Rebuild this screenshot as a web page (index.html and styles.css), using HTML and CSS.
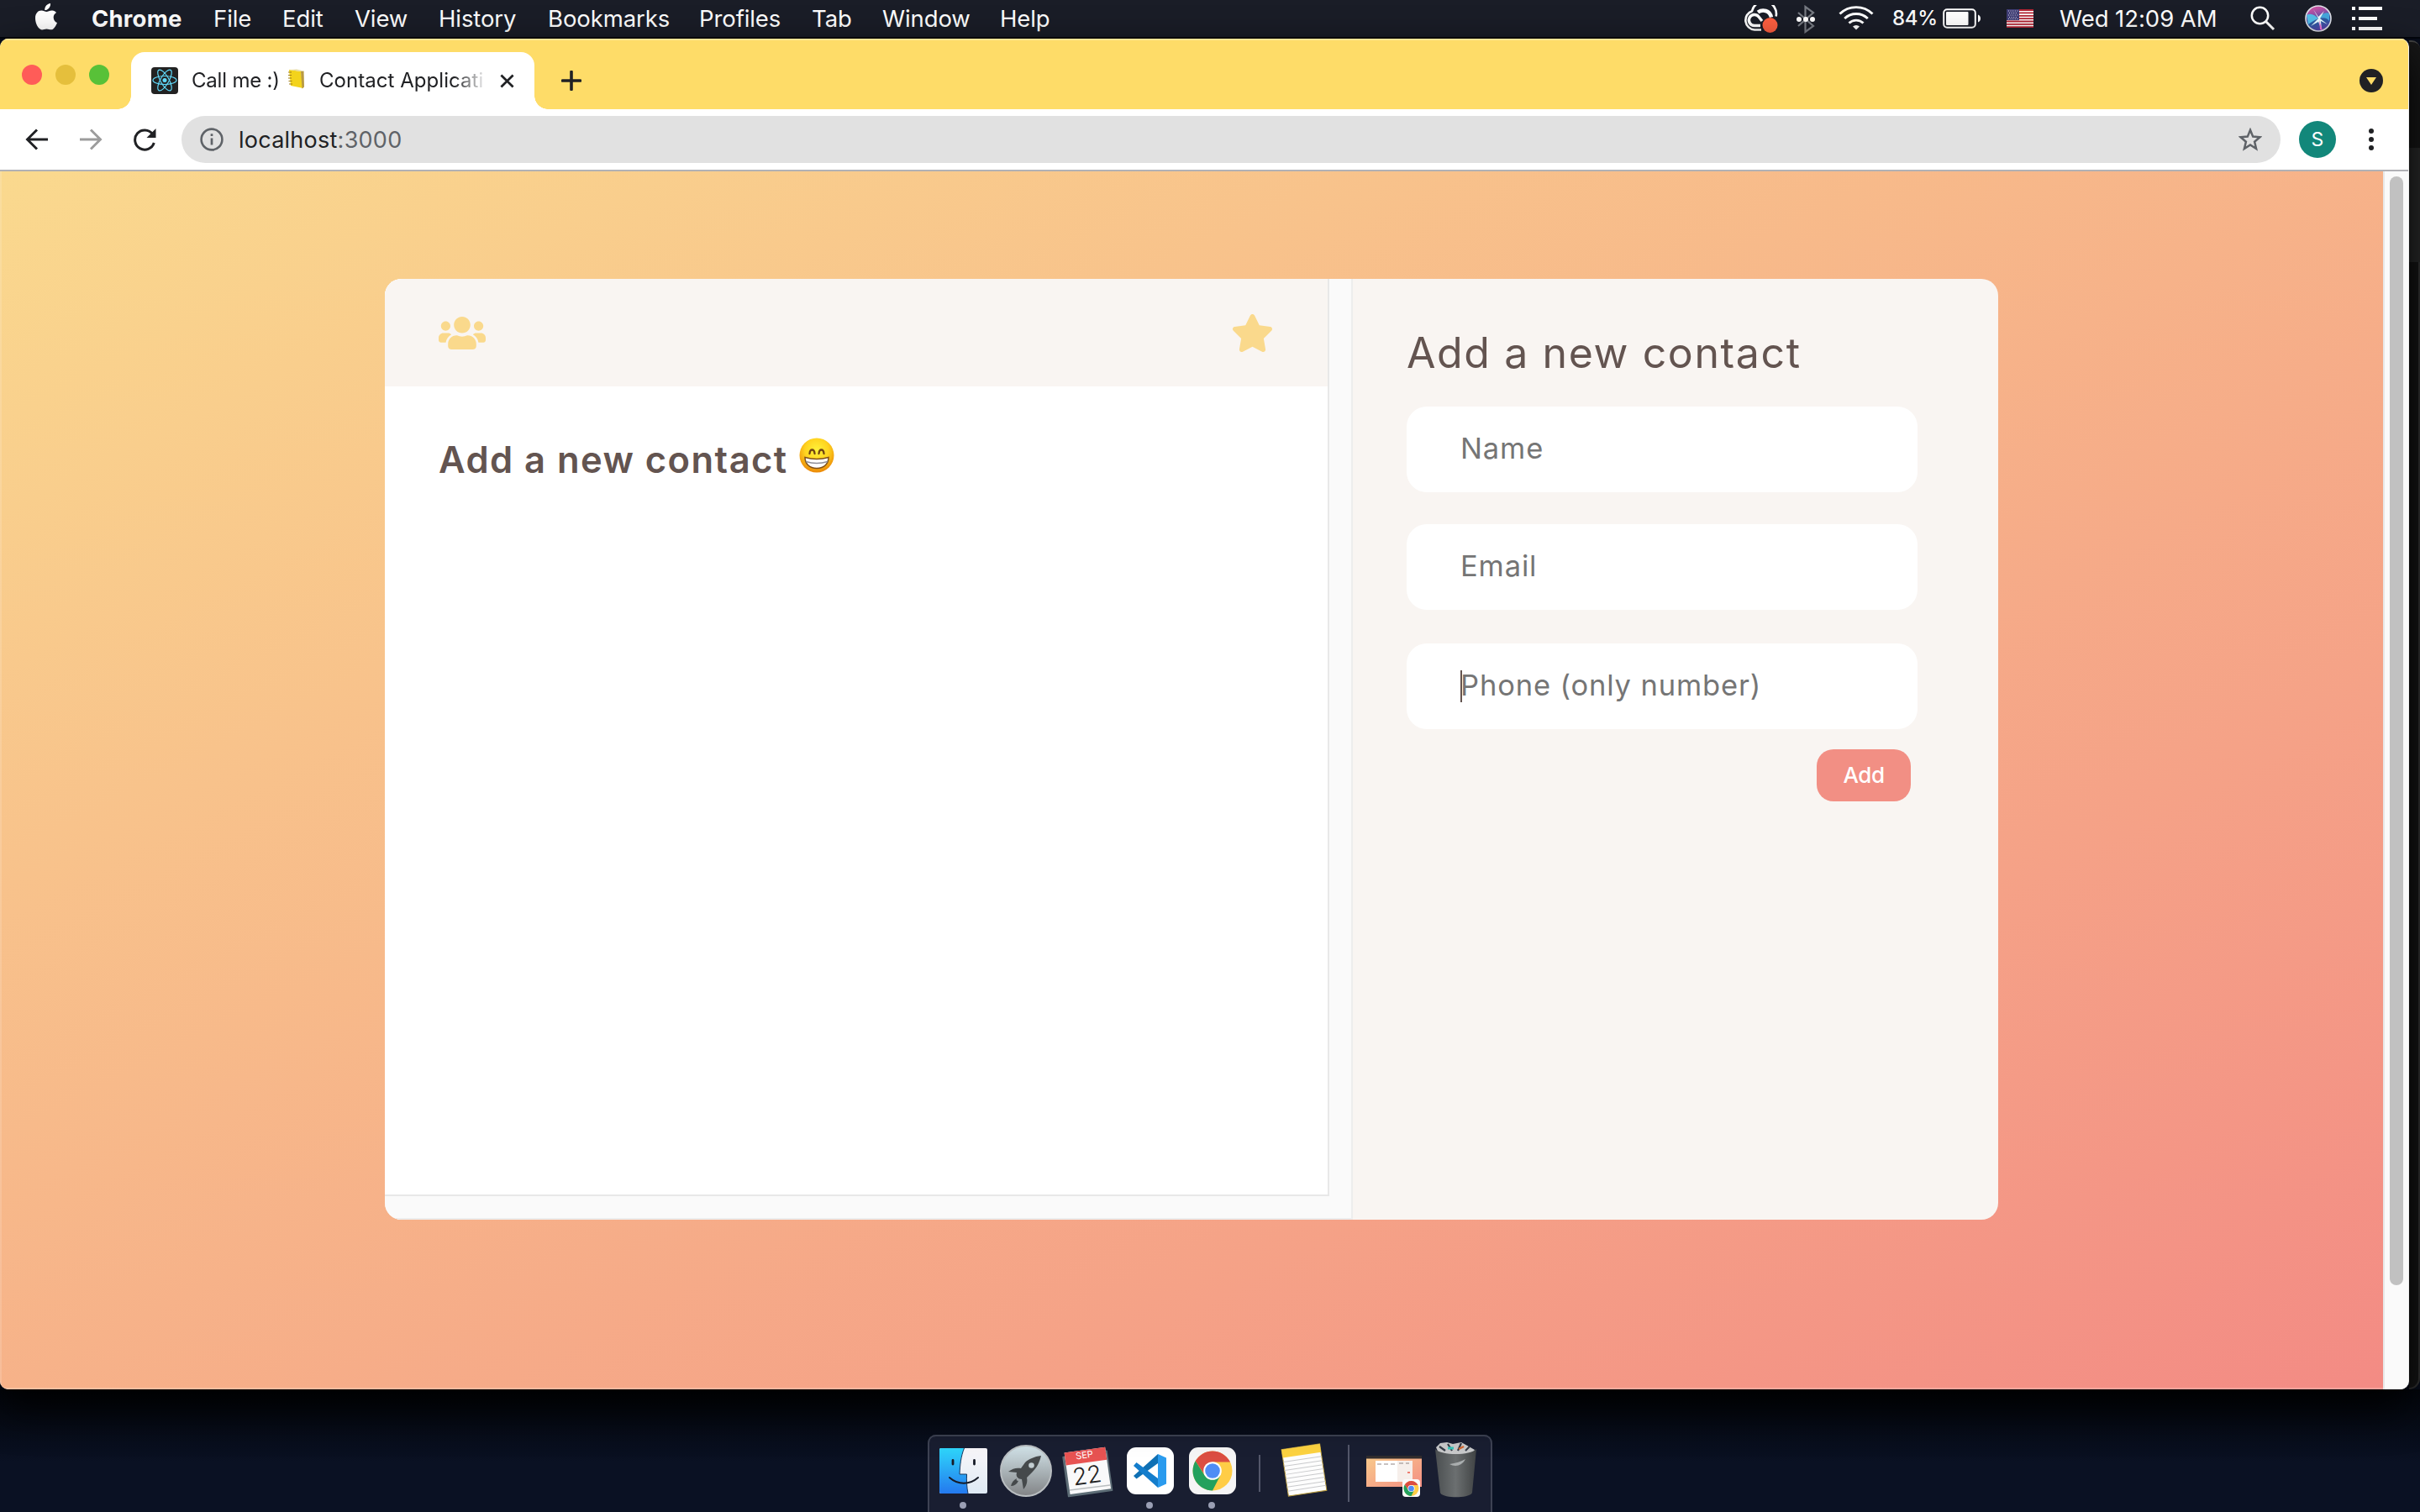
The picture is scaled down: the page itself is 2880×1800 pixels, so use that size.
FILE: index.html
```html
<!DOCTYPE html>
<html lang="en">
<head>
<meta charset="utf-8">
<title>Call me :) Contact Application</title>
<link rel="stylesheet" href="styles.css">
</head>
<body>
<div class="desktop">
  <header class="menubar">
    <svg class="apple" viewBox="0 0 26 32"><path d="M18 0c.4 2.400-.7 4.600-2 6-1.300 1.400-3 2.200-4.700 2-.3-2.300.8-4.400 2-5.700C14.600 1 16.400.2 18 0zM25 11c-2.300 1.500-3.400 3.400-3.300 5.900.1 3 1.800 5.100 4.300 6.100-.9 2.600-2.600 5.500-4.400 7.200-2.600 2.400-5 .3-8.100.3s-5.200 2-7.900.1C2.200 28 0 22.500 0 17.500 0 12 3.300 8.600 7.300 8.600c2.500 0 4.300 1.500 6.100 1.500 1.600 0 3.900-1.700 6.800-1.500 2 .1 3.700 1 4.800 2.400z" fill="#fff"/></svg>
    <nav class="menus">
      <span class="menu menu-app">Chrome</span><span class="menu">File</span><span class="menu">Edit</span><span class="menu">View</span><span class="menu">History</span><span class="menu">Bookmarks</span><span class="menu">Profiles</span><span class="menu">Tab</span><span class="menu">Window</span><span class="menu">Help</span>
    </nav>
    <div class="status">
      <svg class="s-cloud" viewBox="0 0 42 34"><g fill="none" stroke="#fff"><path d="M21 29.500H13A11.500 11.500 0 0 1 10 7.200a13.500 13.500 0 0 1 28.600 6.300" stroke-width="2.600"/><path d="M20 24.500h-7a6.500 6.500 0 1 1 5-10.500l4 5" stroke-width="3.400"/><path d="M17 8.500c6-4 14-2 16 6" stroke-width="4.500"/></g><circle cx="31.500" cy="24" r="9" fill="#ff5f40"/></svg>
      <svg class="s-bt" viewBox="0 0 24 34"><path d="M3 9l18 16-9.500 7V2L21 9 3 25" fill="none" stroke="#777b83" stroke-width="2.200"/><g fill="#fff"><circle cx="4" cy="17" r="3"/><circle cx="12" cy="17" r="3"/><circle cx="20" cy="17" r="3"/></g></svg>
      <svg class="s-wifi" viewBox="0 0 42 30"><g fill="none" stroke="#fff" stroke-width="2.900"><path d="M1.500 10.500a28 28 0 0 1 39 0M7.200 16a20 20 0 0 1 27.600 0M12.500 21.500a12.300 12.300 0 0 1 17 0"/></g><path d="M21 29.500l-4-4a5.800 5.800 0 0 1 8 0z" fill="#fff"/></svg>
      <span class="battery-text">84%</span>
      <svg class="s-bat" viewBox="0 0 46 24"><rect x="1.200" y="1.200" width="37.600" height="21.600" rx="4" fill="none" stroke="#fff" stroke-width="2"/><rect x="4" y="4" width="26.500" height="16" rx="1" fill="#fff"/><path d="M42 7.500c4 1.500 4 7.500 0 9z" fill="#fff"/></svg>
      <svg class="s-flag" viewBox="0 0 32 22"><path fill="#fff" d="M0 0h32v22H0z"/><path d="M0 1h32M0 4.400h32M0 7.800h32M0 11.200h32M0 14.500h32M0 17.900h32M0 21.200h32" stroke="#b32534" stroke-width="1.800"/><path fill="#3f3d75" d="M0 0h15v13H0z"/><path d="M2 2h12M3 4.500h10M2 7h12M3 9.500h10M2 11.500h12" stroke="#d9d9ea" stroke-dasharray="1 1.600" stroke-width="1"/></svg>
      <span class="clock">Wed 12:09 AM</span>
      <svg class="s-search" viewBox="0 0 30 30"><circle cx="11.500" cy="11.500" r="9.700" fill="none" stroke="#fff" stroke-width="2.500"/><path d="M18.500 18.500l9.500 9.500" stroke="#fff" stroke-width="3"/></svg>
      <svg class="s-siri" viewBox="0 0 32 32"><defs><linearGradient id="siri" x1=".3" y1="0" x2=".6" y2="1"><stop offset="0" stop-color="#d9559f"/><stop offset=".3" stop-color="#9a4fa8"/><stop offset=".6" stop-color="#285da4"/><stop offset="1" stop-color="#5d3fa8"/></linearGradient></defs><circle cx="16" cy="16" r="15" fill="url(#siri)" stroke="#dfe2e8" stroke-width="1.600"/><path d="M2 12c5-3 10 0 14 4-6 3-10 5-12 7z" fill="#55bfe9"/><path d="M29 10c-5-2-9 1-13 6 7-2 11 0 13 3z" fill="#45a6dd"/><path d="M16 16L7 25l9-5 4 10-1-11 8 4-9-7 5-9-7 7-6-9z" fill="#e9fbff"/><path d="M17 18l4 12-3-1z" fill="#f16fd0"/></svg>
      <svg class="s-list" viewBox="0 0 36 28"><path d="M0 2h4M8 2h28M0 14h4M8 14h22M0 26h4M8 26h28" stroke="#fff" stroke-width="3.800"/></svg>
    </div>
  </header>

  <div class="stage">
    <main class="window">
      <div class="tabstrip">
        <div class="lights"><i class="red"></i><i class="amber"></i><i class="green"></i></div>
        <div class="tab">
          <svg class="favicon" viewBox="0 0 32 32"><rect width="32" height="32" rx="4" fill="#222"/><g fill="none" stroke="#61dafb" stroke-width="1.200"><ellipse cx="16" cy="15.500" rx="14" ry="5"/><ellipse cx="16" cy="15.500" rx="14" ry="5" transform="rotate(60 16 15.500)"/><ellipse cx="16" cy="15.500" rx="14" ry="5" transform="rotate(120 16 15.500)"/></g><circle cx="16" cy="15.500" r="2.500" fill="#61dafb"/></svg>
          <div class="tab-title"><span class="t-a">Call me :)</span><svg class="book" viewBox="0 0 22 24"><path d="M2 1l14 2 3 20L4 20z" fill="#f3d31c"/><path d="M16 3l3.500-.5.500 19-2.500 2z" fill="#b99a42"/><path d="M2 1l9-.5 8.500 2-3.500.5z" fill="#e8dca0"/><path d="M1 4h4M1 7.500h4M1 11h4M1.500 14.500h4M2 18h4" stroke="#a07d18" stroke-width="1.200"/></svg><span class="t-b">Contact Applicati</span></div>
          <svg class="close" viewBox="0 0 18 18"><path d="M1.500 1.500l15 15M16.500 1.500l-15 15" stroke="#202124" stroke-width="2.900"/></svg>
        </div>
        <svg class="plus" viewBox="0 0 24 24"><path d="M12 1.500v21M1.500 12h21" stroke="#202124" stroke-width="3.600" stroke-linecap="round"/></svg>
        <svg class="drop" viewBox="0 0 28 28"><circle cx="14" cy="14" r="14" fill="#202124"/><path d="M8 10h12l-6 9z" fill="#fedc68"/></svg>
      </div>
      <div class="toolbar">
        <svg class="nav-ic" viewBox="0 0 28 28"><path d="M27 14H3M14 2.500L2.500 14 14 25.500" fill="none" stroke="#202124" stroke-width="2.900"/></svg>
        <svg class="nav-ic" viewBox="0 0 28 28"><path d="M1 14h24M14 2.500L25.500 14 14 25.500" fill="none" stroke="#9c9c9c" stroke-width="2.900"/></svg>
        <svg class="nav-ic" viewBox="0 0 28 28"><path d="M23.500 7.500A11.600 11.600 0 1 0 25.300 18" fill="none" stroke="#202124" stroke-width="3"/><path d="M27.500 1v11h-11z" fill="#202124"/></svg>
        <div class="omnibox">
          <svg class="info" viewBox="0 0 28 28"><circle cx="14" cy="14" r="12.400" fill="none" stroke="#5f6368" stroke-width="2.600"/><path d="M14 12.500v8M14 7.200v2.800" stroke="#5f6368" stroke-width="2.700"/></svg>
          <span class="url">localhost<span class="port">:3000</span></span>
          <svg class="bookmark" viewBox="0 0 28 28"><path d="M14 2.800l3.200 7.800 8.300.7-6.400 5.400 2 8.300-7.100-4.500-7.100 4.500 2-8.300-6.400-5.400 8.300-.7z" fill="none" stroke="#5f6368" stroke-width="2.500"/></svg>
        </div>
        <span class="avatar">S</span>
        <svg class="dots" viewBox="0 0 8 28"><g fill="#202124"><circle cx="4" cy="4" r="3"/><circle cx="4" cy="14" r="3"/><circle cx="4" cy="24" r="3"/></g></svg>
      </div>
      <div class="viewport">
        <div class="page">
          <div class="card">
            <section class="list-wrap">
              <div class="list">
                <div class="list-head">
                  <svg class="users" viewBox="0 0 640 512"><path fill="#fad98c" d="M96 224c35.300 0 64-28.700 64-64s-28.700-64-64-64-64 28.700-64 64 28.700 64 64 64zm448 0c35.300 0 64-28.700 64-64s-28.700-64-64-64-64 28.700-64 64 28.700 64 64 64zm32 32h-64c-17.600 0-33.500 7.100-45.100 18.600 40.300 22.100 68.900 62 75.100 109.400h66c17.700 0 32-14.300 32-32v-32c0-35.300-28.700-64-64-64zm-256 0c61.900 0 112-50.100 112-112S381.900 32 320 32 208 82.100 208 144s50.100 112 112 112zm76.800 32h-8.300c-20.800 10-43.900 16-68.500 16s-47.600-6-68.500-16h-8.300C179.600 288 128 339.600 128 403.200V432c0 26.500 21.500 48 48 48h288c26.500 0 48-21.500 48-48v-28.800c0-63.600-51.600-115.200-115.200-115.200zm-223.700-13.400C161.500 263.100 145.600 256 128 256H64c-35.300 0-64 28.700-64 64v32c0 17.700 14.300 32 32 32h65.900c6.300-47.400 34.900-87.300 75.200-109.400z"/></svg>
                  <svg class="star" viewBox="0 0 576 512"><path fill="#fad98c" d="M259.300 17.800L194 150.200 47.900 171.500c-26.200 3.800-36.700 36.100-17.700 54.600l105.700 103-25 145.500c-4.500 26.300 23.200 46 46.400 33.700L288 439.600l130.700 68.700c23.200 12.200 50.900-7.400 46.400-33.700l-25-145.500 105.700-103c19-18.500 8.500-50.800-17.700-54.600L382 150.200 316.700 17.800c-11.700-23.600-45.600-23.900-57.400 0z"/></svg>
                </div>
                <h2 class="empty"><span>Add a new contact</span><svg class="grin" viewBox="0 0 42 42"><defs><radialGradient id="face" cx=".5" cy=".35" r=".68"><stop offset="0" stop-color="#fff23a"/><stop offset=".5" stop-color="#ffd420"/><stop offset="1" stop-color="#ea8004"/></radialGradient></defs><circle cx="21" cy="21" r="20.500" fill="url(#face)"/><path d="M12.500 19c.5-6 5.500-6 6 0M23.500 19c.5-6 5.500-6 6 0" fill="none" stroke="#704512" stroke-width="2.300" stroke-linecap="round"/><path d="M7 23.500c9 2.500 19 2.500 28 0C35 31 30 36.500 21 36.500S7 31 7 23.500z" fill="#fff" stroke="#80501a" stroke-width="1.500"/><path d="M8 28.500c8 2.500 18 2.500 26 0" fill="none" stroke="#8f8f98" stroke-width="1.600"/></svg></h2>
              </div>
            </section>
            <section class="form">
              <h1 class="form-title">Add a new contact</h1>
              <div class="field">Name</div>
              <div class="field">Email</div>
              <div class="field field-focus"><i class="caret"></i>Phone (only number)</div>
              <button class="add" type="button">Add</button>
            </section>
          </div>
        </div>
        <div class="scrollbar"><div class="thumb"></div></div>
      </div>
    </main>
    <aside class="behind"><div class="b1"></div><div class="b2"></div><div class="b3"></div></aside>
  </div>

  <footer class="dock-area">
    <div class="dock">
      <svg class="dock-svg" viewBox="0 0 672 92" width="672" height="92">
        <defs>
          <linearGradient id="fb" x1="0" y1="0" x2="0" y2="1"><stop offset="0" stop-color="#2fd6fb"/><stop offset="1" stop-color="#2479ee"/></linearGradient>
          <linearGradient id="fw" x1="0" y1="0" x2="0" y2="1"><stop offset="0" stop-color="#f8f6f9"/><stop offset="1" stop-color="#dfeaf5"/></linearGradient>
          <linearGradient id="lp" x1="0" y1="0" x2="0" y2="1"><stop offset="0" stop-color="#d3e4ea"/><stop offset="1" stop-color="#828486"/></linearGradient>
          <linearGradient id="tr" x1="0" y1="0" x2="1" y2="0"><stop offset="0" stop-color="#4b4f51"/><stop offset=".5" stop-color="#6b6f70"/><stop offset="1" stop-color="#404344"/></linearGradient>
          <linearGradient id="mini" x1="0" y1="0" x2="1" y2="1"><stop offset="0" stop-color="#f9cb8b"/><stop offset="1" stop-color="#f38f84"/></linearGradient>
          <g id="chrome"><circle r="23.500" fill="#ffcd46"/><path d="M-20.350-11.750A23.500 23.500 0 0 1 20.350-11.750L21-10.500H0l-9 15.700z" fill="#db4e42"/><path d="M-20.350-11.750A23.500 23.500 0 0 0 0 23.500l9.300-18L-9.300 5.400z" fill="#23a15d"/><circle r="10.800" fill="#fff"/><circle r="8.800" fill="#4f8df5"/></g>
        </defs>
        <rect x="14" y="16" width="57" height="54" rx="2" fill="url(#fw)"/>
        <path d="M16 16h27.500c-4 10-5 20-5.500 31h8.500c-.3 8 0 15 1.500 23H16a2 2 0 0 1-2-2V18a2 2 0 0 1 2-2z" fill="url(#fb)"/>
        <path d="M43.500 16c-4 10-5 20-5.500 31h8.500c-.3 8 0 15 1.500 23" fill="none" stroke="#17385f" stroke-width="1"/>
        <path d="M30 30.500v4.500M55.500 30.500v4.500" stroke="#161b27" stroke-width="2.800" stroke-linecap="round"/>
        <path d="M26 51c10 9 24 9 34 0" fill="none" stroke="#161b27" stroke-width="2" stroke-linecap="round"/>

        <circle cx="117" cy="43" r="30" fill="url(#lp)" stroke="#b9bec1" stroke-width="2"/>
        <path d="M135 25c-8 1-15 4-19 8l-5 7c-5-1-10 0-15 4l10 1c-1 3 0 5 1 6s3 2 5 2l2 12c4-5 5-9 4-14l7-7c5-5 8-11 10-19z" fill="#45494b"/><circle cx="123.500" cy="36.500" r="3.300" fill="#c2cdd1"/><path d="M106 52c-4 2-6 5-7 9 4 0 7-2 9-6-2 0-3-1-2-3z" fill="#45494b"/>

        <g transform="rotate(-8 190 44)"><rect x="163" y="22" width="54" height="49" rx="1" fill="#5d6d76"/><rect x="166" y="18" width="49" height="50" fill="#f9f9fa"/><rect x="166" y="18" width="49" height="15" fill="#e75352"/></g>
        <path d="M169 66l48-6" stroke="#b9bdbf" stroke-width="1.500"/>
        <text x="187" y="28" class="cal-m" transform="rotate(-8 187 28)">SEP</text>
        <text x="191" y="58" class="cal-d" transform="rotate(-8 191 58)">22</text>

        <rect x="237" y="15" width="56" height="56" rx="11" fill="#fff"/>
        <path d="M274 23l10 4.500v31L274 63z" fill="#2a9bee"/><path d="M274 23L245 49l3.500 3.500L274 34z" fill="#0f70b4"/><path d="M274 63L245 37l3.500-4L274 52z" fill="#147dcc"/>

        <rect x="311" y="15" width="56" height="56" rx="11" fill="#f5f5f5"/>
        <use href="#chrome" transform="translate(339 43)"/>
        <g fill="#9a9fb4"><circle cx="42" cy="84" r="4"/><circle cx="264" cy="84" r="4"/><circle cx="338" cy="84" r="4"/></g>
        <path d="M395 24v44M501 12v68" stroke="#53576a" stroke-width="2"/>

        <g transform="rotate(-8.500 448 42)"><rect x="425" y="14" width="46" height="56" fill="#fdfdfd" stroke="#b79a3c" stroke-width="1"/><rect x="425" y="14" width="46" height="10" fill="#fcd240"/><path d="M425 29h46M425 34h46M425 39h46M425 44h46M425 49h46M425 54h46M425 59h46M425 64h46" stroke="#c9cacc" stroke-width="1"/></g>

        <rect x="522" y="25" width="66" height="37" fill="url(#mini)"/><rect x="522" y="25" width="66" height="3.500" fill="#302c2d"/>
        <rect x="533" y="31" width="26" height="25" fill="#fff"/><rect x="559" y="31" width="18" height="25" fill="#f6efeb"/><path d="M535 35h22M561 34h12" stroke="#8f8583" stroke-width="1" stroke-dasharray="5 3"/><path d="M571 45h3" stroke="#ee7d70" stroke-width="2"/>
        <rect x="565" y="53" width="21" height="21" rx="4" fill="#fafafa"/><use href="#chrome" transform="translate(575.500 64) scale(.38)"/>

        <path d="M605 15l5-5 8-1 7 2 10-2 9 5 7 4-3 6h-39z" fill="#c8c9ca"/><path d="M609 14l7 5M619 11l5 8M635 10l-4 9M645 14l-5 5" stroke="#343a45" stroke-width="2.200"/><path d="M619 16h7" stroke="#36c4b8" stroke-width="3"/><path d="M632 17l6-3" stroke="#d2652f" stroke-width="2.500"/>
        <path d="M604 17c8 8 41 8 49 0l-5 52c-2 7-36 7-38 0z" fill="url(#tr)"/><path d="M621 35c7-1 14-3 19-6-4 8-12 10-19 6z" fill="#a9adae"/>
      </svg>
    </div>
  </footer>
</div>
</body>
</html>
```
FILE: styles.css
```css
* { box-sizing: border-box; }
body { margin: 0; font-family: Inter, "Liberation Sans", sans-serif; }
svg { display: block; flex: none; }
.desktop { width: 2880px; height: 1800px; overflow: hidden; display: flex; flex-direction: column; background: #080d1b; }

.menubar { height: 46px; flex: none; display: flex; align-items: flex-start; background: #1a1d27; border-bottom: 2px solid #02050c; color: #fff; font-size: 27.500px; line-height: 44px; white-space: nowrap; }
.apple { width: 26px; height: 32px; margin: 4px 0 0 42px; }
.menus { display: grid; grid-template-columns: 145px 82px 86px 100px 130px 180px 134px 84px 140px 80px; margin-left: 41px; }
.menu { letter-spacing: -.1px; }
.menu-app { font-weight: 700; letter-spacing: .2px; }
.status { display: flex; margin-left: auto; padding-right: 45px; }
.s-cloud { width: 42px; height: 34px; margin-top: 6px; }
.s-bt { width: 24px; height: 34px; margin: 6px 0 0 20px; }
.s-wifi { width: 42px; height: 30px; margin: 6px 0 0 27px; }
.battery-text { width: 60px; margin-left: 22px; font-size: 24px; line-height: 43px; font-weight: 500; letter-spacing: -.3px; }
.s-bat { width: 46px; height: 24px; margin-top: 10px; }
.s-flag { width: 32px; height: 22px; margin: 11px 0 0 30px; }
.clock { width: 189px; margin-left: 31px; letter-spacing: -.05px; }
.s-search { width: 30px; height: 30px; margin: 7px 0 0 38px; }
.s-siri { width: 32px; height: 32px; margin: 6px 0 0 35px; }
.s-list { width: 36px; height: 28px; margin: 8px 0 0 24px; }

.stage { display: flex; height: 1608px; flex: none; }
.window { width: 2867px; display: flex; flex-direction: column; border-radius: 10px; overflow: hidden; background: #fff; box-shadow: 0 20px 50px #000; position: relative; border-right: 1px solid #eee; }
.behind { flex: 1; padding-top: 2px; display: flex; flex-direction: column; }
.b1 { height: 128px; background: #171717; border-top: 2px solid #444; border-top-right-radius: 10px; }
.b2 { height: 136px; background: #2a2b2b; }
.b3 { flex: 1; background: #161616; border-right: 2px solid #343434; border-bottom: 2px solid #343434; border-bottom-right-radius: 14px; }

.tabstrip { height: 84px; flex: none; display: flex; background: #fedc68; border-top: 2px solid #ffe694; }
.lights { display: flex; gap: 16px; padding: 29px 0 0 26px; width: 156px; }
.lights i { width: 24px; height: 24px; border-radius: 50%; }
.red { background: #ff5c58; }
.amber { background: #e5bf3c; }
.green { background: #58c138; }
.tab { position: relative; width: 480px; margin-top: 14px; padding-left: 24px; border-radius: 16px 16px 0 0; background: #fff; display: flex; }
.tab::before, .tab::after { content: ""; position: absolute; bottom: 0; width: 16px; height: 16px; }
.tab::before { left: -16px; background: radial-gradient(circle at 0 0, transparent 15.500px, #fff 16px); }
.tab::after { right: -16px; background: radial-gradient(circle at 100% 0, transparent 15.500px, #fff 16px); }
.favicon { width: 32px; height: 32px; margin-top: 18px; }
.tab-title { display: flex; flex: none; width: 350px; margin-left: 16px; white-space: nowrap; font-size: 24px; line-height: 67px; letter-spacing: -.2px; color: #202124; -webkit-mask-image: linear-gradient(90deg, #000 312px, transparent 352px); mask-image: linear-gradient(90deg, #000 312px, transparent 352px); }
.t-a { flex: none; width: 114px; }
.t-b { flex: none; letter-spacing: .05px; }
.book { width: 22px; height: 24px; margin: 20px 16px 0 0; }
.close { width: 17px; height: 17px; margin: 26px 0 0 17px; }
.plus { width: 24px; height: 24px; margin: 36px 0 0 32px; }
.drop { width: 28px; height: 28px; margin: 34px 30px 0 auto; }

.toolbar { height: 74px; flex: none; display: flex; align-items: center; border-bottom: 2px solid #b1b1b5; padding-left: 30px; background: #fff; }
.nav-ic { width: 28px; height: 28px; margin-right: 36px; }
.nav-ic:nth-child(3) { margin-right: 30px; }
.omnibox { flex: none; width: 2498px; height: 56px; border-radius: 28px; background: #e1e1e1; display: flex; align-items: center; padding: 0 22px; }
.info { width: 28px; height: 28px; }
.url { margin-left: 18px; font-size: 27px; letter-spacing: .25px; color: #202124; }
.port { color: #5f6368; }
.bookmark { width: 28px; height: 28px; margin-left: auto; }
.avatar { width: 44px; height: 44px; margin-left: 22px; border-radius: 50%; background: #12877a; color: #fff; font-size: 23px; line-height: 44px; text-align: center; }
.dots { width: 8px; height: 28px; margin-left: 38px; }

.viewport { flex: 1; display: flex; min-height: 0; }
.page { width: 2836px; padding: 128px 0 0 458px; background: linear-gradient(to bottom right, #fad98e, #f38b84); box-shadow: inset 2px 0 #ffffff26, inset 0 -2px #ffffff33; }
.scrollbar { width: 30px; background: #fafafa; border-left: 2px solid #e8e8e8; padding: 6px 0 0 6px; }
.thumb { width: 16px; height: 1320px; border-radius: 8px; background: #c1c1c1; }

.card { width: 1920px; height: 1120px; display: flex; border-radius: 20px; overflow: hidden; background: #f9f5f2; color: #635450; }
.list-wrap { width: 1152px; background: #fafafa; border-right: 2px solid #ededed; border-bottom: 2px solid #ededed; padding: 0 26px 26px 0; }
.list { height: 1092px; background: #fff; border-right: 2px solid #e8e8e8; border-bottom: 2px solid #e8e8e8; }
.list-head { height: 128px; background: #f9f5f2; display: flex; justify-content: space-between; padding: 42px 64px 0; }
.users { width: 56px; height: 45px; }
.star { width: 51px; height: 45px; }
.empty { display: flex; margin: 0; padding: 59px 0 0 64px; font-weight: 580; font-size: 43.500px; line-height: 56px; letter-spacing: 1.450px; white-space: nowrap; }
.empty span { width: 429px; }
.grin { width: 42px; height: 42px; margin-top: 2px; }
.form { flex: 1; display: flex; flex-direction: column; padding: 56px 96px 0 64px; }
.form-title { margin: 0 0 32px; font-weight: 430; font-size: 50px; line-height: 64px; letter-spacing: 1.600px; white-space: nowrap; }
.field { width: 608px; height: 102px; flex: none; margin-bottom: 38px; border-radius: 24px; background: #fff; padding-left: 64px; color: #757575; font-size: 34.500px; line-height: 99px; letter-spacing: .85px; }
.field:nth-of-type(2) { margin-bottom: 40px; }
.field-focus { position: relative; margin-bottom: 24px; }
.caret { position: absolute; left: 64px; top: 32px; width: 2px; height: 38px; background: #635450; }
.add { width: 112px; height: 62px; margin: 0 0 0 488px; padding: 0; border: 0; border-radius: 20px; background: #f28f84; color: #fff; font: 450 26px/62px Inter, sans-serif; letter-spacing: -.4px; }

.dock-area { flex: 1; display: flex; justify-content: center; align-items: flex-end; background: linear-gradient(#03060c, #0a1123 60%); }
.dock { width: 672px; height: 92px; border-radius: 10px 10px 0 0; background: #191e31; box-shadow: inset 0 2px #3d4253, inset 2px 0 #3d4253, inset -2px 0 #3d4253; }
.cal-m { font: 400 11px Inter, sans-serif; fill: #fff; text-anchor: middle; }
.cal-d { font: 300 28px Inter, sans-serif; fill: #222; text-anchor: middle; }
```
